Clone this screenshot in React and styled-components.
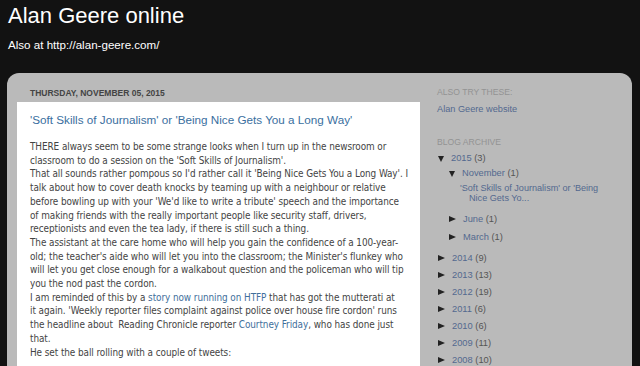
import React from 'react';
import styled, { createGlobalStyle } from 'styled-components';

const GlobalStyle = createGlobalStyle`
	html, body {
		margin: 0;
		padding: 0;
		background: #121212;
	}
	body {
		font-family: 'Liberation Sans', Arial, sans-serif;
		overflow: hidden;
	}
`;

const Page = styled.div`
	width: 640px;
	height: 366px;
	overflow: hidden;
	background: #121212;
`;

const Header = styled.header`
	padding: 3px 8px 0;
	height: 70px;
	box-sizing: border-box;
	color: #fff;
`;

const SiteTitle = styled.h1`
	margin: 0;
	font-weight: normal;
	font-size: 22px;
	line-height: 26px;
`;

const SiteDescription = styled.div`
	margin-top: 9px;
	font-size: 11.6px;
	line-height: 14px;
`;

const Outer = styled.div`
	display: flex;
	margin: 3px 8px 0 7px;
	padding: 0 0 0 10px;
	height: 300px;
	border-radius: 12px 12px 0 0;
	background: #bababa;
`;

const MainColumn = styled.main`
	width: 403px;
	flex-shrink: 0;
`;

const DateHeader = styled.h2`
	margin: 0;
	padding: 13.5px 0 0 13px;
	height: 29px;
	box-sizing: border-box;
	font-size: 8.5px;
	line-height: 12px;
	font-weight: bold;
	color: #444;
	text-transform: uppercase;
`;

const PostBox = styled.article`
	background: #fff;
	padding: 10px 12px 20px 13px;
	height: 260px;
`;

const PostTitle = styled.h3`
	margin: 0 0 12px;
	font-weight: normal;
	font-size: 11.7px;
	line-height: 16px;
	color: #3a6fa0;
`;

const PostBody = styled.div`
	font-family: 'DejaVu Sans Condensed', 'DejaVu Sans', Verdana, sans-serif;
	font-size: 9.9px;
	letter-spacing: -0.07px;
	line-height: 13.7px;
	color: #444;
`;

const Para = styled.div``;

// the post keeps the line breaks of the original page
const Line = styled.span`
	display: block;
	white-space: nowrap;
`;

const Link = styled.a`
	color: ${({ $tone }) => ($tone === 'side' ? '#53698f' : '#3f6f9c')};
	text-decoration: none;
`;

const Sidebar = styled.aside`
	margin-left: 17px;
	padding-top: 13.5px;
	flex: 1;
	color: #555;
`;

const WidgetTitle = styled.h4`
	margin: 0 0 ${({ $gap }) => $gap}px;
	font-size: 8.6px;
	line-height: 11px;
	font-weight: normal;
	color: #939393;
	text-transform: uppercase;
`;

const Widget = styled.section`
	margin-bottom: ${({ $gap }) => $gap || 0}px;
	font-size: 9.2px;
	line-height: 12px;
`;

const ArchiveList = styled.ul`
	list-style: none;
	margin: 0;
	padding: 0;
	font-size: 9.3px;
`;

const ArchiveItem = styled.li`
	display: flex;
	align-items: center;
	padding-left: ${({ $level }) => ($level === 2 ? 11 : 0)}px;
	margin-bottom: ${({ $gap }) => $gap || 0}px;
	height: 15px;
	line-height: 15px;
`;

const Toggle = styled.span`
	flex-shrink: 0;
	width: 0;
	height: 0;
	margin: 0 7px 0 1px;
	border-style: solid;
	border-color: transparent;
	${({ $open }) =>
		$open
			? `
		border-width: 6px 3.5px 0;
		border-top-color: #222;
		margin-top: 1px;
	`
			: `
		border-width: 3.5px 0 3.5px 7px;
		border-left-color: #222;
	`}
`;

const PostLinkItem = styled.li`
	padding-left: 23px;
	margin: 2.5px 0 8.5px;
	width: 150px;
	font-size: 9.1px;
	line-height: 10px;
`;

const IndentLine = styled.span`
	display: block;
	padding-left: 9px;
`;

const years = [
	['2014', 9],
	['2013', 13],
	['2012', 19],
	['2011', 6],
	['2010', 6],
	['2009', 11],
	['2008', 10],
];

export default function App() {
	return (
		<Page>
			<GlobalStyle />
			<Header>
				<SiteTitle>Alan Geere online</SiteTitle>
				<SiteDescription>Also at http://alan-geere.com/</SiteDescription>
			</Header>
			<Outer>
				<MainColumn>
					<DateHeader>Thursday, November 05, 2015</DateHeader>
					<PostBox>
						<PostTitle>
							'Soft Skills of Journalism' or 'Being Nice Gets You a Long Way'
						</PostTitle>
						<PostBody>
							<Para>
								<Line>
									THERE always seem to be some strange looks when I turn up in the
									newsroom or
								</Line>
								<Line>
									classroom to do a session on the 'Soft Skills of Journalism'.
								</Line>
							</Para>
							<Para>
								<Line>
									That all sounds rather pompous so I'd rather call it 'Being Nice
									Gets You a Long Way'. I
								</Line>
								<Line>
									talk about how to cover death knocks by teaming up with a
									neighbour or relative
								</Line>
								<Line>
									before bowling up with your 'We'd like to write a tribute' speech
									and the importance
								</Line>
								<Line>
									of making friends with the really important people like security
									staff, drivers,
								</Line>
								<Line>
									receptionists and even the tea lady, if there is still such a
									thing.
								</Line>
							</Para>
							<Para>
								<Line>
									The assistant at the care home who will help you gain the
									confidence of a 100-year-
								</Line>
								<Line>
									old; the teacher's aide who will let you into the classroom; the
									Minister's flunkey who
								</Line>
								<Line>
									will let you get close enough for a walkabout question and the
									policeman who will tip
								</Line>
								<Line>you the nod past the cordon.</Line>
							</Para>
							<Para>
								<Line>
									I am reminded of this by a <Link>story now running on HTFP</Link>{' '}
									that has got the mutterati at
								</Line>
								<Line>
									it again. 'Weekly reporter files complaint against police over
									house fire cordon' runs
								</Line>
								<Line>
									the headline about&nbsp; Reading Chronicle reporter{' '}
									<Link>Courtney Friday</Link>, who has done just
								</Line>
								<Line>that.</Line>
							</Para>
							<Para>
								<Line>He set the ball rolling with a couple of tweets:</Line>
							</Para>
						</PostBody>
					</PostBox>
				</MainColumn>
				<Sidebar>
					<Widget $gap={21.5}>
						<WidgetTitle $gap={5.5}>Also try these:</WidgetTitle>
						<Link $tone="side">Alan Geere website</Link>
					</Widget>
					<Widget>
						<WidgetTitle $gap={3}>Blog Archive</WidgetTitle>
						<ArchiveList>
							<ArchiveItem>
								<Toggle $open />
								<Link $tone="side">2015</Link>&nbsp;(3)
							</ArchiveItem>
							<ArchiveItem $level={2}>
								<Toggle $open />
								<Link $tone="side">November</Link>&nbsp;(1)
							</ArchiveItem>
							<PostLinkItem>
								<Link $tone="side">
									'Soft Skills of Journalism' or 'Being
									<IndentLine>Nice Gets Yo...</IndentLine>
								</Link>
							</PostLinkItem>
							<ArchiveItem $level={2} $gap={3}>
								<Toggle />
								<Link $tone="side">June</Link>&nbsp;(1)
							</ArchiveItem>
							<ArchiveItem $level={2} $gap={6}>
								<Toggle />
								<Link $tone="side">March</Link>&nbsp;(1)
							</ArchiveItem>
							{years.map(([y, n]) => (
								<ArchiveItem key={y} $gap={2}>
									<Toggle />
									<Link $tone="side">{y}</Link>&nbsp;({n})
								</ArchiveItem>
							))}
						</ArchiveList>
					</Widget>
				</Sidebar>
			</Outer>
		</Page>
	);
}
